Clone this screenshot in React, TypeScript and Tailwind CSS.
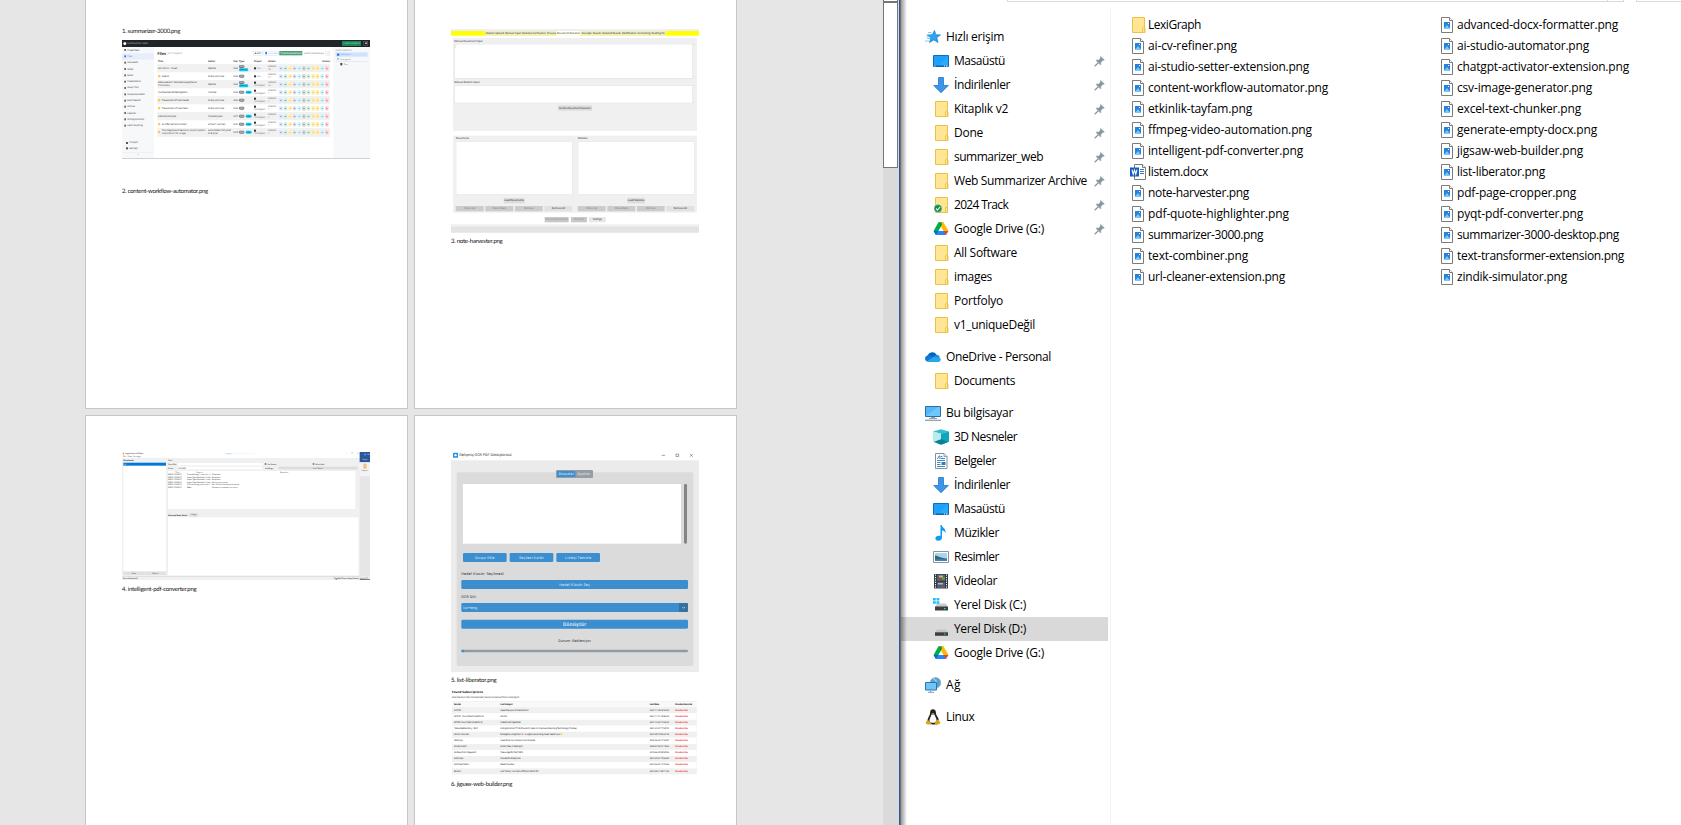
import React, { useLayoutEffect, useRef, useState } from "react";

/* Text tracked so that it spans exactly `w` pixels. */
function Fit({ t, w, c = "" }: { t: string; w: number; c?: string }) {
  const ref = useRef<HTMLSpanElement>(null);
  const [ls, setLs] = useState(0);
  useLayoutEffect(() => {
    if (!ref.current) return;
    const natural = parseFloat(getComputedStyle(ref.current).width);
    setLs((w - natural) / t.length);
  }, [t, w]);
  return (
    <span ref={ref} className={`inline-block shrink-0 whitespace-pre ${c}`} style={{ letterSpacing: `${ls}px` }}>
      {t}
    </span>
  );
}

/* ---------- Explorer icons ---------- */
const Svg = ({ children, c = "" }: { children: React.ReactNode; c?: string }) => (
  <svg viewBox="0 0 16 16" className={`block h-4 w-4 shrink-0 ${c}`}>{children}</svg>
);

const Folder = () => (
  <Svg>
    <path d="M2.500.5h12v10.200l.5.8v4h-12.500z" fill="#ffe594" stroke="#e8c34a" />
    <path d="M12.500 15.500v-4.500l.7-.8h1.300v5.300z" fill="#ffe594" stroke="#e8c34a" strokeWidth=".9" />
  </Svg>
);
const SyncedFolder = () => (
  <Svg>
    <path d="M2.500.5h12v15h-12z" fill="#ffe594" stroke="#e8c34a" />
    <path d="M12.500 15.500v-5h2v5z" fill="#ffe594" stroke="#e8c34a" strokeWidth=".9" />
    <circle cx="5" cy="11.500" r="4" fill="#168a50" stroke="#e3f2d2" strokeWidth=".5" />
    <path d="M3 11.500l1.500 1.600 2.700-3.200" fill="none" stroke="#d9f5e5" strokeWidth="1.100" />
  </Svg>
);
const Star = () => (
  <Svg>
    <path d="M9.500 1.500l1.300 4.200 4.700.2-3.700 2.700 1.200 4.900-4.200-2.600-4.300 2.700 1.300-4.500L2.500 6l4.700-.2z" fill="#2aa5ee" stroke="#1783cc" strokeWidth=".7" />
    <path d="M3 3.500h3.500M1.500 6H5M2 9.500h3M0 12h4M1.500 7.700h2.500" stroke="#63bdf0" strokeWidth=".8" />
  </Svg>
);
const Desktop = () => (
  <Svg>
    <path d="M.5 2.500h15v11H.5z" fill="#1ea1fb" stroke="#0b6fbf" />
    <path d="M5 13l9.500-9.500V13z" fill="#35b0ff" opacity=".6" />
    <path d="M1 13h14" stroke="#0a5fa8" />
    <path d="M1.500 13h1M11 13h1M13 13h1.500" stroke="#fff" />
  </Svg>
);
const Down = () => (
  <Svg>
    <path d="M5.500.5h5v8h4.800L8 15.700.7 8.500h4.800z" fill="#3a96e8" stroke="#2678c4" strokeWidth=".8" />
  </Svg>
);
const Drive = () => (
  <Svg>
    <path d="M5.300 1.500L.6 9.900 3 14l5-8.500z" fill="#00ac47" />
    <path d="M5.300 1.500h5.200L8 5.500z" fill="#0b8a3a" />
    <path d="M10.500 1.500l5 8.400h-5L5.600 1.500z" fill="#ffba00" />
    <path d="M5.300 1.500h3L9 3.400 7.500 6.100z" fill="#00993f" />
    <path d="M3 14l2.400-4.100h7.600L12.900 14z" fill="#2684fc" />
    <path d="M.6 9.900h4.900L3 14z" fill="#0066da" />
    <path d="M10.600 9.900h4.900L13 14z" fill="#ea4335" />
  </Svg>
);
const OneDrive = () => (
  <Svg>
    <path d="M3.200 12.500A3.200 3.200 0 012.600 6.500 5 5 0 0111.500 5.500l-3 7z" fill="#0364b8" />
    <path d="M2.600 6.500c2-.8 4 .2 6 1.500l-4 4.500H3A3.100 3.100 0 01.1 9.300C.2 8 1.200 6.900 2.600 6.500z" fill="#0f78d4" />
    <path d="M8 8l3-2.200c2 0 3.300.8 3.700 2.400L12 11z" fill="#1490df" />
    <path d="M2 12.200L8.500 8l6.200.8a2.300 2.300 0 01-1.200 4.200H3.300z" fill="#28a8ea" />
  </Svg>
);
const Pc = () => (
  <Svg>
    <path d="M.5 1.500h15v10H.5z" fill="#52b8fb" stroke="#2f6f9e" />
    <path d="M1 11L13 2h2v9z" fill="#7accff" opacity=".7" />
    <path d="M6 12.500h4M4 13.500h8" stroke="#8fa3b5" />
    <path d="M0 15.300h16" stroke="#8b98a8" strokeWidth="1.200" />
  </Svg>
);
const Cube = () => (
  <Svg>
    <path d="M8 .3l8 2.200L8 5 0 2.500z" fill="#35bcd0" />
    <path d="M0 2.500L8 4.800v11L0 12.800z" fill="#a3e6ea" />
    <path d="M16 2.500L8 4.800v11l8-3z" fill="#10a5bd" />
    <path d="M1 13l7-3 7 3-7 2.800z" fill="#0e7f93" />
    <path d="M0 12.500V2.500l8 2.300v5.500z" fill="#c5f2f2" opacity=".6" />
  </Svg>
);
const Doc = () => (
  <Svg>
    <path d="M2.500.5h8.500l3 3v12h-11.500z" fill="#fff" stroke="#8a8f94" />
    <path d="M11 .5v3h3" fill="#dfe3e6" stroke="#8a8f94" strokeWidth=".8" />
    <path d="M4.500 6L6 3h1v3M8 3.500h1.500M8 5.500h4M4 7.500h8M4 9.500h3.500M4 11.500h3.500M4 13.500h8" fill="none" stroke="#3a87c8" />
    <path d="M8.500 9h4v3h-4z" fill="#397cae" />
  </Svg>
);
const Music = () => (
  <Svg>
    <path d="M7.500 0h1.200c.3 2.700 4.500 3.200 3.800 8.200-.7-1.700-1.800-2.600-3.500-2.700v7.300c0 1.600-1.500 2.900-3.600 2.900-1.800 0-3-1-3-2.300 0-1.500 1.500-2.600 3.300-2.600.7 0 1.300.1 1.800.4z" fill="#0f9af5" />
  </Svg>
);
const Picture = () => (
  <Svg>
    <path d="M.5 2.500h15v11H.5z" fill="#fff" stroke="#8f9498" />
    <path d="M2 4h12v8H2z" fill="#a7d5f2" />
    <path d="M2 6.500c3 0 4 2.500 12 3V12H2z" fill="#356a72" />
    <path d="M2 10.500c5-.5 8-.5 12 0V12H2z" fill="#3f83c0" />
  </Svg>
);
const Video = () => (
  <Svg>
    <path d="M1 1h14v14.500H1z" fill="#3a3a3a" />
    <path d="M4 1.500h8v6.500H4zM4 9h8v6H4z" fill="#3d5f9b" />
    <path d="M6 2.500h4v2H6zM5 10h5v1.500H5z" fill="#e3b93a" />
    <path d="M5 5.500h4V7H5zM8 12.500h3V14H8z" fill="#b0462c" />
    <path d="M9 4.500h3v2H9z" fill="#64a54d" />
    <path d="M2.500 1.500v14M13.500 1.500v14" stroke="#fff" strokeDasharray="1.200 1.200" />
  </Svg>
);
const Disk = () => (
  <Svg>
    <path d="M4 8.500h9l2 3H2z" fill="#c3c5c7" />
    <path d="M2 11.300h13v3.500H2z" fill="#3d4043" />
    <path d="M11 13h1.500" stroke="#3fe04f" strokeWidth="1.200" />
  </Svg>
);
const DiskC = () => (
  <Svg>
    <path d="M4 6.500h9l2 3.500H2z" fill="#c9cbce" />
    <path d="M2 9.500h13v4H2z" fill="#3d4043" />
    <path d="M11 11.700h1.500" stroke="#3fe04f" strokeWidth="1.200" />
    <path d="M0 1h2.800v2.500H0zM3.500 1h2.800v2.500H3.500zM0 4.300h2.800v2.500H0zM3.500 4.300h2.800v2.500H3.500z" fill="#1fc0f2" />
  </Svg>
);
const Network = () => (
  <Svg>
    <circle cx="10.500" cy="5.800" r="5.300" fill="#5ba3cf" stroke="#7e9fb5" strokeWidth=".5" />
    <path d="M8 1.500c2.500.5 1.500 2.500 4 3" fill="none" stroke="#a9d5ec" strokeWidth="1.200" />
    <path d="M.5 5.500h11v7.500H.5z" fill="#6fc5f7" stroke="#2776ad" />
    <path d="M5.500 13.500v1.500M3 15.300h6" stroke="#7f9bb0" />
  </Svg>
);
const Tux = () => (
  <Svg>
    <path d="M5 4.500C5 1.500 6 .2 8 .2s3 1.500 3 4.300c0 2 3 4 3 8 0 2-3 3-6 3s-5.500-1-5.500-3c0-4 2.500-6 2.500-8z" fill="#262320" />
    <path d="M6.500 5.500h3c.5 2.500 2.500 4 2 7-.6 1.700-6.400 1.700-7 0-.4-3 1.500-4.500 2-7z" fill="#fff" />
    <path d="M6.300 4.200h3.200L8 5.800z" fill="#e6a817" />
    <path d="M2.500 10.500l4 3.800c-.5 1.600-2.500 1.700-5.500.4C.6 13.500 1.500 12 2.500 10.500zM13.500 10.500l2 3.500c-1.500 1.600-5 2.700-5.500 1.200 0-2 .5-4 3.500-4.700z" fill="#d9a520" />
  </Svg>
);
const PngFile = () => (
  <Svg>
    <path d="M2.500.5h8l3 3v12h-11z" fill="#fff" stroke="#7b7b7b" />
    <path d="M10.500.5v3h3" fill="#fff" stroke="#7b7b7b" />
    <path d="M5 5h6v6.500H5z" fill="#1f86dc" />
    <path d="M5 11.500L8 8l3 3.500z" fill="#79c5f5" />
    <path d="M9 5h2v2H9z" fill="#5a63d8" />
    <path d="M9 6.500h1" stroke="#fff" />
  </Svg>
);
const WordFile = () => (
  <Svg>
    <path d="M4.500.5h8l3 3v12h-11z" fill="#fff" stroke="#7b7b7b" />
    <path d="M12.500.5v3h3" fill="#fff" stroke="#7b7b7b" />
    <path d="M10 5.500h4M10 7.500h4M10 9.500h4" stroke="#2b7cd3" />
    <path d="M0 3.500h9v9H0z" fill="#185abd" />
    <path d="M2 5.700l1.200 4.500L4.500 6l1.300 4.200L7 5.700" fill="none" stroke="#fff" strokeWidth="1.100" />
  </Svg>
);
const Pin = () => (
  <svg viewBox="0 0 11 11" className="block h-[11px] w-[11px]">
    <path d="M6.500.5L10.300 4l-1.800.5-1.700 2L6.600 9 2 4.300l2.700-.2L6.300 2.500z" fill="#8b979f" stroke="#8b979f" strokeWidth=".6" />
    <path d="M.7 10.300L4.300 6.700" stroke="#8b979f" strokeWidth="1.300" />
  </svg>
);

type NavItem = { icon: () => React.JSX.Element; t: string; w: number; root?: boolean; pin?: boolean; gap?: boolean; sel?: boolean };
const nav: NavItem[] = [
  { icon: Star, t: "Hızlı erişim", w: 58, root: true },
  { icon: Desktop, t: "Masaüstü", w: 51, pin: true },
  { icon: Down, t: "İndirilenler", w: 56, pin: true },
  { icon: Folder, t: "Kitaplık v2", w: 54, pin: true },
  { icon: Folder, t: "Done", w: 29, pin: true },
  { icon: Folder, t: "summarizer_web", w: 89, pin: true },
  { icon: Folder, t: "Web Summarizer Archive", w: 133, pin: true },
  { icon: SyncedFolder, t: "2024 Track", w: 54, pin: true },
  { icon: Drive, t: "Google Drive (G:)", w: 90, pin: true },
  { icon: Folder, t: "All Software", w: 63 },
  { icon: Folder, t: "images", w: 38 },
  { icon: Folder, t: "Portfolyo", w: 49 },
  { icon: Folder, t: "v1_uniqueDeğil", w: 81 },
  { icon: OneDrive, t: "OneDrive - Personal", w: 105, root: true, gap: true },
  { icon: Folder, t: "Documents", w: 61 },
  { icon: Pc, t: "Bu bilgisayar", w: 67, root: true, gap: true },
  { icon: Cube, t: "3D Nesneler", w: 63 },
  { icon: Doc, t: "Belgeler", w: 42 },
  { icon: Down, t: "İndirilenler", w: 56 },
  { icon: Desktop, t: "Masaüstü", w: 51 },
  { icon: Music, t: "Müzikler", w: 45 },
  { icon: Picture, t: "Resimler", w: 45 },
  { icon: Video, t: "Videolar", w: 43 },
  { icon: DiskC, t: "Yerel Disk (C:)", w: 72 },
  { icon: Disk, t: "Yerel Disk (D:)", w: 72, sel: true },
  { icon: Drive, t: "Google Drive (G:)", w: 90 },
  { icon: Network, t: "Ağ", w: 15, root: true, gap: true },
  { icon: Tux, t: "Linux", w: 28.5, root: true, gap: true },
];

const files: [string, number][][] = [
  [["LexiGraph", 53], ["ai-cv-refiner.png", 89], ["ai-studio-setter-extension.png", 161], ["content-workflow-automator.png", 180], ["etkinlik-tayfam.png", 104], ["ffmpeg-video-automation.png", 164], ["intelligent-pdf-converter.png", 155], ["listem.docx", 60], ["note-harvester.png", 101], ["pdf-quote-highlighter.png", 141], ["summarizer-3000.png", 115], ["text-combiner.png", 100], ["url-cleaner-extension.png", 137]],
  [["advanced-docx-formatter.png", 161], ["ai-studio-automator.png", 132], ["chatgpt-activator-extension.png", 172], ["csv-image-generator.png", 135], ["excel-text-chunker.png", 124], ["generate-empty-docx.png", 140], ["jigsaw-web-builder.png", 126], ["list-liberator.png", 88], ["pdf-page-cropper.png", 119], ["pyqt-pdf-converter.png", 126], ["summarizer-3000-desktop.png", 162], ["text-transformer-extension.png", 167], ["zindik-simulator.png", 110]],
];

/* Thumbnail of a window: drawn 744 px wide and shown at a third of that size. */
const Thumb = ({ box, inner, children }: { box: string; inner: string; children: React.ReactNode }) => (
  <div className={`w-[248px] shrink-0 overflow-hidden [text-rendering:geometricPrecision] ${box}`}>
    <div className={`w-[744px] origin-top-left scale-[0.33334] overflow-hidden font-[Open_Sans,sans-serif] ${inner}`}>{children}</div>
  </div>
);

const Caption = ({ t, w }: { t: string; w: number }) => (
  <div className="flex h-3 items-center font-[Lato,sans-serif] text-[6px] leading-3 text-[#111] [text-rendering:geometricPrecision]"><Fit t={t} w={w} /></div>
);

/* ---------- 1: summarizer ---------- */
const side: [string, number][] = [["Project Desk", 36], ["Files", 14], ["Documents", 32], ["Notes", 18], ["Books", 18], ["Presentations", 40], ["Study Plans", 34], ["Study Documents", 52], ["Exam Reports", 40], ["Archive", 22], ["Calendar", 26], ["Writing Assistant", 50], ["Learn Anything", 46]];
type Row = { t: string; t2?: string; w: number; star?: boolean; a: string; aw: number; y: string; k: string; p?: boolean };
const rows: Row[] = [
  { t: "Don Norris - Visuell", w: 58, a: "Website", aw: 23, y: "2023", k: "stack", p: true },
  { t: "Dreams", w: 22, star: true, a: "Dr Boy, Karl Lane", aw: 48, y: "2023", k: "one", p: true },
  { t: "Little Guide 2021: Machine Drawing Manual", t2: "Philosophy", w: 115, a: "Website", aw: 23, y: "2023", k: "stack" },
  { t: "YouTube Video Whitelisting Basics", w: 88, a: "YouTube", aw: 24, y: "2023", k: "two" },
  { t: "The evolution of Public Reader", w: 82, star: true, a: "Dr Boy, Karl Lane", aw: 48, y: "2023", k: "one" },
  { t: "The evolution of Public Read", w: 78, star: true, a: "Dr Boy, Karl Lane", aw: 48, y: "2023", k: "one" },
  { t: "A Minimal Storyline", w: 54, a: "Tyra Bold, Jones", aw: 43, y: "2017", k: "two" },
  { t: "An Offer Remains Indirect", w: 74, star: true, a: "Archie T. Sanchez", aw: 52, y: "2024", k: "two" },
  { t: "The integrative of decisions, psychic options,", t2: "implications for usage...", w: 132, star: true, a: "Susan Noble, Prof. Just et", aw: 68, y: "2018", k: "two" },
];
const acts = ["bg-[#dceafe] text-[#2f6fe8]", "bg-[#d8eee2] text-[#198754]", "bg-[#fff0c4] text-[#f5b400]", "bg-[#e4e6e8] text-[#555c63]", "bg-[#d4f5fc] text-[#20bfe0]", "bg-[#d5d7d9] text-[#6c757d]", "bg-[#d8f0e2] text-[#198754]", "bg-[#ffedb3] text-[#f5b829]", "bg-[#ffedb3] text-[#f5b829]", "bg-[#cff4fc] text-[#0dbad8]", "bg-[#fbd5d9] text-[#dc3545]"];

const Summarizer = () => (
  <Thumb box="h-[119px]" inner="h-[357px] bg-white text-[7px] leading-[9px] text-[#333]">
    <div className="flex h-[21px] items-center bg-[#212529] pl-1 pr-[6px] text-white">
      <div className="h-[9px] w-[9px] rounded-full bg-white" />
      <div className="ml-[3px] text-[8px] text-[#bbb]"><Fit t="Summarizer 3000" w={61} /></div>
      <div className="ml-auto flex h-[15px] w-[57px] items-center justify-center bg-[#198754] text-[#b8dccb]"><Fit t="+ Add Content ▾" w={50} /></div>
      <div className="ml-2 flex h-[13px] w-[13px] items-center justify-center border border-[#888] text-[8px]">♟</div>
    </div>
    <div className="flex h-[333px]">
      <div className="flex w-[96px] flex-col bg-[#f7f8fa]">
        {side.map(([t, w], i) => (
          <div key={t} className={`flex h-[18.900px] items-center pl-[7px] ${i === 1 ? "bg-[#e7eef9] text-[#3b7cf0]" : ""}`}>
            <span className={`mr-[4px] h-[6px] w-[5px] ${i === 1 ? "bg-[#2474ee]" : "bg-[#666]"}`} /><Fit t={t} w={w} />
          </div>
        ))}
        <div className="mt-[34px] flex h-4 items-center pl-3"><span className="mr-1 h-[6px] w-[6px] bg-[#555]" /><Fit t="Prompts" w={25} /></div>
        <div className="flex h-4 items-center pl-3"><span className="mr-1 h-[6px] w-[6px] bg-[#555]" /><Fit t="Settings" w={25} /></div>
        <div className="mt-[3px] flex h-4 items-center justify-center border-t border-[#e2e2e2]">«</div>
      </div>
      <div className="w-[538px] px-[10px] pt-[11px]">
        <div className="flex h-[15px] items-center">
          <b className="mr-1 text-[12px] leading-[15px]"><Fit t="Files" w={26} /></b><Fit t="(All Projects)" w={45} c="text-[#777]" />
          <div className="ml-auto flex h-[13px] w-[27px] items-center justify-center border border-[#ccc]">✚ Edit</div>
          <div className="ml-1 flex h-[13px] w-[45px] items-center gap-1 border border-[#b9d1fa] pl-1 text-[6px] text-[#6ca0f8]"><i className="h-[7px] w-[5px] shrink-0 bg-[#2474ee]" /><Fit t="Quick Menu" w={32} /></div>
          <div className="ml-[2px] flex h-[13px] w-[69px] items-center justify-center bg-[#4b9e75] text-white"><Fit t="✎ Remove Content (0) ▾" w={62} /></div>
          <div className="ml-[6px] w-[64px] text-[#888]"><Fit t="Search in the entire app" w={58} /></div>
          <div className="flex h-[13px] w-[13px] items-center justify-center border border-[#ccc]">⌕</div>
        </div>
        <div className="mt-[7px] flex h-[19px] items-center border-b border-[#ddd] pl-[2px] font-bold">
          <span className="w-[150px]"><Fit t="Title" w={15} /></span><span className="w-[76px]"><Fit t="Author" w={21} /></span><span className="w-[17px]"><Fit t="Year" w={13} /></span><span className="w-[45px]"><Fit t="Type" w={16} /></span><span className="w-[42px]"><Fit t="Project" w={22} /></span><Fit t="Added ↓" w={26} /><span className="ml-auto"><Fit t="Actions" w={23} /></span>
        </div>
        {rows.map((r, i) => (
          <div key={i} className={`flex h-6 items-center border-b border-[#e4e4e4] pl-[2px] ${i % 2 ? "bg-white" : "bg-[#f1f1f1]"}`}>
            <div className="flex w-[150px] items-center">
              {r.star && <span className="mr-1 h-[7px] w-[7px] rounded-full bg-[#ffc431]" />}
              <div><Fit t={r.t} w={r.w} />{r.t2 && <div>{r.t2}</div>}</div>
            </div>
            <div className="w-[76px]"><Fit t={r.a} w={r.aw} />{i === 8 && <div>Al & Jane</div>}</div>
            <div className="w-[17px]"><Fit t={r.y} w={14} /></div>
            <div className={`flex w-[45px] text-[6px] leading-[8px] text-white ${r.k === "stack" ? "flex-col items-start gap-[1px]" : "gap-1"}`}>
              <span className="h-[9px] w-[16px] rounded-sm bg-[#737a80] text-center">PDF</span>
              {r.k === "stack" && <span className="h-[9px] w-[28px] rounded-sm bg-[#0dcaf0] text-center text-[#145]">Manual</span>}
              {r.k === "two" && <span className="h-[9px] w-[18px] rounded-sm bg-[#0dcaf0] text-center text-[#145]">URL</span>}
            </div>
            {r.p ? (
              <div className="flex w-[42px] items-center gap-[2px] text-[#6ca0f8]"><span className="h-[6px] w-[6px] bg-[#333]" />Dev</div>
            ) : (
              <div className="w-[42px] text-[#777]"><div className="h-[6px] w-[6px] bg-[#333]" /><Fit t="Unassigned" w={32} /></div>
            )}
            <div className="w-[33px] text-[#666]"><Fit t="2025-08-" w={25} /><div>1{i < 3 ? 5 - i : ""}</div></div>
            <div className="flex flex-1 justify-between pr-1 text-[6px]">
              {acts.map((a, j) => <span key={j} className={`flex h-[14px] w-[11px] items-center justify-center rounded-sm ${a}`}>■</span>)}
            </div>
          </div>
        ))}
      </div>
      <div className="w-[110px] bg-[#f7f8fa] px-[7px] pt-[5px] text-[6px] text-[#777]">
        <div className="h-[11px]"><Fit t="SWITCH DESKTOP" w={48} /></div>
        <div className="flex h-[13px] items-center gap-1 bg-[#cfe2ff] pl-1 text-[#4b84d8]"><i className="h-[6px] w-[7px] bg-[#1d6cf0]" /><Fit t="All Projects" w={30} /></div>
        <div className="flex h-[15px] items-center gap-1 border-b border-[#ccd] pl-1"><i className="h-[6px] w-[6px] border border-[#999]" /><Fit t="Unassigned" w={30} /></div>
        <div className="flex h-[15px] items-center gap-1 pl-[14px] text-[#333]"><i className="h-[7px] w-[6px] bg-[#444]" /><Fit t="Test" w={12} /></div>
      </div>
    </div>
    <div className="h-[3px] bg-[#ced2d6]" />
  </Thumb>
);

/* ---------- 2: document selection window ---------- */
const GreyBtn = ({ t, c, w }: { t: string; c: string; w: number }) => (
  <div className={`flex h-4 shrink-0 items-center justify-center ${c}`}><Fit t={t} w={w} /></div>
);
const ListGroup = ({ name, nw, load, lw, bw }: { name: string; nw: number; load: string; lw: number; bw: string }) => (
  <div className="w-[366px] bg-[#f0f0f0] pl-[8px]">
    <div className="flex h-[17px] items-center"><Fit t={name} w={nw} /></div>
    <div className="h-[161px] w-[352px] border-[2px] border-[#e4e4e4] bg-white" />
    <div className="flex h-[33px] w-[350px] items-center justify-center"><GreyBtn t={load} w={lw} c={`bg-[#dcdcdc] ${bw}`} /></div>
    <div className="flex w-[350px] justify-between text-[#777]">
      <GreyBtn t="Move Up" w={32} c="w-[84px] bg-[#ccc]" /><GreyBtn t="Move Down" w={40} c="w-[84px] bg-[#ccc]" /><GreyBtn t="Remove" w={28} c="w-[83px] bg-[#ccc]" /><GreyBtn t="Remove All" w={40} c="w-[84px] bg-[#e1e1e1] text-[#222]" />
    </div>
  </div>
);
const Harvester = () => (
  <Thumb box="h-[204px]" inner="h-[611px] bg-white text-[8px] leading-[10px] text-[#222]">
    <div className="h-[6px] bg-[#efefef]" />
    <div className="flex h-[14px] bg-[#ff0] pl-[102px] leading-[14px]">
      <div className="w-[215px] bg-[#f0f0c4] pl-[2px]"><Fit t="Statistic Upload  Manual Input  Statistics Verification  Process" w={211} /></div>
      <div className="w-[72px] bg-white pl-[1px]"><Fit t="Document Selection" w={69} /></div>
      <div className="w-[255px] bg-[#f0f0c4] pl-[3px]"><Fit t="Excerpts  Results  Detailed Results  Modification  Formatting  Reading Fix" w={249} /></div>
    </div>
    <div className="mx-[6px] mt-[7px] h-[279px] bg-[#f0f0f0] pl-1">
      <div className="flex h-[17px] items-center"><Fit t="Manual Document Input" w={84} /></div>
      <div className="flex h-[105px]">
        <div className="w-[716px] border-[2px] border-[#e2e2e2] bg-white">|</div>
        <div className="flex flex-1 flex-col justify-between text-[7px] text-[#888]"><span>⌃</span><span>⌄</span></div>
      </div>
      <div className="flex h-[20px] items-center"><Fit t="Manual Bulletin Input" w={75} /></div>
      <div className="flex h-[54px]">
        <div className="w-[716px] border-[2px] border-[#e2e2e2] bg-white" />
        <div className="flex flex-1 flex-col justify-between text-[7px] text-[#888]"><span>⌃</span><span>⌄</span></div>
      </div>
      <div className="ml-[311px] mt-[6px]"><GreyBtn t="Send to Document Selection" w={96} c="w-[102px] bg-[#dcdcdc]" /></div>
    </div>
    <div className="mx-[6px] mt-[14px] flex h-[231px]">
      <ListGroup name="Documents" nw={40} load="Load Documents" lw={59} bw="w-[63px]" />
      <ListGroup name="Statistics" nw={29} load="Load Statistics" lw={49} bw="w-[53px]" />
    </div>
    <div className="flex h-[35px] items-center pl-[281px] pt-[6px]">
      <GreyBtn t="Process Documents" w={68} c="mr-[7px] w-[72px] bg-[#c8c8c8] text-[#888]" />
      <GreyBtn t="Run Full" w={28} c="mr-[6px] w-[48px] bg-[#c8c8c8] text-[#888]" />
      <GreyBtn t="Settings" w={27} c="w-[50px] bg-[#e8e8e8]" />
    </div>
    <div className="h-[8px] bg-[#efefef]" />
    <div className="h-[17px] border-y border-[#d5d5d5] bg-[#e4e4e4]" />
  </Thumb>
);

/* ---------- 3: notebook window ---------- */
const logs: [string, string][] = [
  ["Scrambled type 1, step 1, p1 - It", "3 Steps here"],
  ["Import Type: Notebook - H asks", "4 steps here"],
  ["Import Type: Notebook - H asks", "4 steps here"],
  ["Import Type: Notebook - H asks", "Libere count mean"],
  ["Still remaining count mail - I", "Not 120 mi to believe preliminary"],
  ["Mode", "You want it example: test three"],
];
const Notebook = () => (
  <Thumb box="h-[128px]" inner="h-[385px] bg-[#f0f0f0] text-[6px] leading-[8px] text-[#333]">
    <div className="flex h-[385px]">
      <div className="w-[713px]">
        <div className="h-[18px] bg-white">
          <div className="flex h-[9px] items-center pl-[2px]"><i className="mr-[3px] h-[5px] w-[4px] bg-[#e8a33a]" /><Fit t="Image Converter v1.0.0 Alpha" w={54} /><span className="ml-[248px] h-1 w-[18px] bg-[#c5e3fa]" /><span className="h-px w-[70px] bg-[#d7ebfa]" /><span className="ml-auto flex gap-[11px] pr-[4px]"><span>–</span><span>☐</span><span>✕</span></span></div>
          <div className="flex h-[9px] items-center gap-1 pl-[3px]"><span>File</span><span>View</span><span>Settings</span></div>
        </div>
        <div className="flex h-[353px] pl-1">
          <div className="w-[134px]">
            <div className="flex h-[14px] items-center font-bold"><Fit t="Notebooks" w={32} /></div>
            <div className="h-[325px] w-[128px] bg-white"><div className="h-[9px] bg-[#0078d7] pl-[2px] text-white">all</div></div>
            <div className="mt-[2px] flex w-[128px] gap-[1px]"><span className="h-[10px] flex-1 bg-[#e1e1e1] text-center">New</span><span className="h-[10px] flex-1 bg-[#e1e1e1] text-center">Delete</span></div>
          </div>
          <div className="w-[571px]">
            <div className="h-[12px] pt-[3px]"><Fit t="Notes" w={13} /></div>
            <div className="flex h-[12px] items-center"><span className="w-[29px]"><Fit t="Source Filter" w={25} /></span><span className="h-[7px] w-[256px] bg-white" /><span className="ml-[5px] mr-[2px] h-[6px] w-[6px] border border-[#888] bg-white" /><Fit t="Start Number" w={27} /><span className="ml-[109px] mr-[2px] h-[6px] w-[6px] border border-[#888] bg-white" /><Fit t="Refresh Now" w={26} /></div>
            <div className="flex h-[12px] items-center"><span className="w-[29px]"><Fit t="Format" w={15} /></span><span className="h-[8px] w-[254px] bg-white pl-[2px] leading-[8px]"><Fit t="01/01/2025" w={22} /></span><span className="ml-[8px] w-[40px]"><Fit t="Load Range" w={24} /></span><span className="h-[8px] w-[238px] bg-[#ddd] text-center">Last Notes</span></div>
            <div className="mt-[3px] flex h-[114px]">
              <div className="w-[562px] bg-white">
                <div className="flex h-[8px] items-center pl-[22px]"><span className="w-[63px]">Title</span><span className="w-[251px]">Source</span><span>Remarks</span></div>
                {logs.map(([a, b], i) => (
                  <div key={i} className="flex h-[7.400px] items-center leading-[7px]"><span className="w-[57px]"><Fit t="2025-01-12 12:00:15" w={40} /></span><span className="w-[74px]"><Fit t={a} w={i === 5 ? 12 : 70} /></span><Fit t={b} w={[26, 26, 26, 48, 82, 78][i]} /></div>
                ))}
              </div>
            </div>
            <div className="flex h-[24px] items-end pb-[1px] font-bold"><Fit t="Selected Note Detail" w={58} /><span className="ml-[6px] h-[11px] w-[26px] bg-[#e0e0e0] text-center font-normal">Copy</span></div>
            <div className="mt-[1px] h-[174px] bg-white" />
          </div>
        </div>
        <div className="mt-[2px] flex h-[12px] items-center justify-between border-t-2 border-[#d8d8d8] pl-[2px] pr-1 text-[#222]"><Fit t="Source: Notebook: All" w={44} /><Fit t="Toggle Dark Theme   Always Onboard" w={74} /></div>
      </div>
      <div className="flex w-[31px] flex-col">
        <div className="flex h-[31px] flex-col items-center justify-between bg-[#2b579a] py-[3px] text-[6px] text-white"><span className="ml-3 whitespace-nowrap">▥ &nbsp; Pa</span><span className="text-[5px]">Dosya</span></div>
        <div className="flex h-[42px] flex-col items-center bg-[#f3f3f3] pt-1"><span className="h-[15px] w-[10px] bg-[#ecc583]" /><span>Yapıştır</span></div>
        <div className="h-[301px] bg-[#e6e6e6]" />
        <div className="h-[8px] overflow-hidden whitespace-nowrap bg-[#f0f0f0]"><Fit t="Sayfa 2/17" w={24} /></div>
        <div className="h-[3px] bg-[#444]" />
      </div>
    </div>
  </Thumb>
);

/* ---------- 4: OCR converter window ---------- */
const Blue = ({ t, w, c = "" }: { t: string; w: number; c?: string }) => (
  <div className={`flex h-[27px] shrink-0 items-center justify-center rounded-[4px] bg-[#3b8ed0] text-[#dce9f4] ${c}`}><Fit t={t} w={w} /></div>
);
const Ocr = () => (
  <Thumb box="h-[222px]" inner="h-[666px] bg-[#ebebeb] font-[Roboto,sans-serif] text-[11px] leading-[13px] text-[#333]">
    <div className="flex h-[31px] items-center bg-white pl-[6px]">
      <div className="flex h-[15px] w-[15px] items-center justify-center rounded-[2px] bg-[#1f8fe5]"><i className="h-[7px] w-[7px] rounded-full bg-white" /></div>
      <div className="ml-1"><Fit t="Gelişmiş OCR PDF Dönüştürücü" w={157} /></div>
      <svg viewBox="0 0 100 12" className="ml-auto mr-[14px] h-3 w-[100px]" fill="none" stroke="#444" strokeWidth="1.500"><path d="M2 6h10M45 2h8v8h-8zM87 2l8 8M95 2l-8 8" /></svg>
    </div>
    <div className="mx-[17px] mt-[36px] flex h-[581px] flex-col rounded-[6px] bg-[#dbdbdb] pl-[14px]">
      <div className="-mt-[7px] ml-[284px] flex h-[24px] w-[111px] shrink-0 items-center rounded-[4px] bg-[#979da2] px-[3px] text-[#e4e9ed]">
        <div className="flex h-[18px] w-[55px] items-center justify-center bg-[#3b8ed0]"><Fit t="Dosyalar" w={46} /></div>
        <div className="flex flex-1 justify-center"><Fit t="Ayarlar" w={38} /></div>
      </div>
      <div className="mt-[18px] flex h-[179px] shrink-0 pl-[5px]"><div className="w-[654px] bg-white" /><div className="ml-[9px] w-[9px] rounded-[4px] bg-[#858585]" /></div>
      <div className="mt-[28px] flex gap-[9px] pl-[5px]"><Blue t="Dosya Ekle" w={59} c="w-[131px]" /><Blue t="Seçileni Kaldır" w={75} c="w-[131px]" /><Blue t="Listeyi Temizle" w={79} c="w-[131px]" /></div>
      <div className="mt-[28px] h-[13px]"><Fit t="Hedef Klasör: Seçilmedi" w={127} /></div>
      <Blue t="Hedef Klasör Seç" w={92} c="mt-[13px] w-[680px]" />
      <div className="mt-[18px] h-[13px]"><Fit t="OCR Dili:" w={46} /></div>
      <div className="mt-[11px] flex h-[27px] w-[680px] shrink-0 items-center overflow-hidden rounded-[4px] bg-[#3b8ed0] pl-[6px] text-[#dce9f4]">
        <Fit t="tur+eng" w={42} />
        <div className="ml-auto flex h-full w-[27px] items-center justify-center bg-[#36719f]"><svg viewBox="0 0 10 6" className="h-[6px] w-[10px]" fill="none" stroke="#e5eef5" strokeWidth="2"><path d="M1 1l4 4 4-4" /></svg></div>
      </div>
      <Blue t="Dönüştür" w={70} c="mt-[23px] w-[680px] text-[15px] font-bold" />
      <div className="mt-[29px] flex h-[13px] w-[680px] justify-center"><Fit t="Durum: Bekleniyor" w={98} /></div>
      <div className="mt-[21px] h-[8px] w-[680px] rounded-[4px] bg-[#939ba2]"><div className="h-full w-[9px] rounded-[4px] bg-[#3b8ed0]" /></div>
    </div>
  </Thumb>
);

/* ---------- 5: subscription list ---------- */
const subs: [string, number, string, number, string][] = [
  ["AIPRM", 20, "OpenRise your AI interactions!", 84, "2024-11-25 22:02:02"],
  ["AIPRM - Your Cheat Code for AI", 89, "last call", 19, "2024-11-21 20:56:26"],
  ["AIPRM-Your Cheat Code for AI", 85, "Unleash with OpenRise!", 60, "2024-12-02 19:06:22"],
  ['"About Better Story | Elsa"', 72, "Calling All Smart TV Enthusiasts: Help Us Improve Streaming Technology! (Turkey)", 229, "2021-04-07 17:08:42"],
  ["Allison Courses", 45, "Emergency Cognition: 🧠 A Highly rewarding career needs you 👉", 187, "2024-08-18 02:04:46"],
  ["Allianz Joy", 26, "OpenRise Your Analysis and Analyze", 104, "2022-06-20 14:02:57"],
  ["Asaad at edX", 37, "Asaad: New, Checking In", 67, "2025-04-02 01:15:06"],
  ["Andrew from Ragwood!", 66, "Free usage for the TOEFL", 68, "2015-06-28 08:08:26"],
  ["Anthropic", 28, "Claude for Enterprise", 60, "2024-09-04 18:06:59"],
  ["Anthropic Team", 44, "Meet Claude 3", 42, "2024-03-04 19:40:36"],
  ["Blinkist", 20, "Last Today: Your 50% Off Ends March for", 115, "2024-05-14 08:11:02"],
];
const Subscriptions = () => (
  <Thumb box="h-[88px]" inner="h-[264px] bg-white px-[3px] text-[7px] leading-[10px] text-[#222]">
    <div className="flex h-[18px] items-center text-[9px] font-bold text-black"><Fit t="Found Subscriptions" w={93} /></div>
    <div className="flex h-[18px] items-center"><Fit t='Click the link in the "Unsubscribe" column to opt-out from a mailing list.' w={202} /></div>
    <div className="flex h-[19px] w-[734px] items-center border-y border-[#e5e5e5] bg-[#f9f9f9] pl-[6px] font-bold text-[#111]">
      <span className="w-[139px]"><Fit t="Sender" w={21} /></span><span className="w-[448px]"><Fit t="Last Subject" w={37} /></span><span className="w-[76px]"><Fit t="Last Date" w={28} /></span><Fit t="Unsubscribe Link" w={51} />
    </div>
    {subs.map(([a, aw, b, bw, d], i) => (
      <div key={i} className={`flex h-[18.250px] w-[734px] items-center border-x border-[#ececec] pl-[5px] ${i % 2 ? "bg-white" : "bg-[#f0f0f0]"}`}>
        <span className="w-[139px]"><Fit t={a} w={aw} /></span><span className="w-[448px]"><Fit t={b} w={bw} /></span><span className="w-[76px]"><Fit t={d} w={58} /></span><b className="text-[#f03030]"><Fit t="Unsubscribe" w={38} /></b>
      </div>
    ))}
  </Thumb>
);

const page = "flex w-[323px] shrink-0 flex-col border border-[#c6c6c6] bg-white";

export default function App() {
  return (
    <div className="flex h-[825px] w-[1681px] overflow-hidden bg-white">
      <div className="grid h-[825px] w-[883px] shrink-0 grid-cols-[323px_323px] grid-rows-[409px_410px] content-start gap-[6px] overflow-hidden bg-[#e6e6e6] pl-[85px]">
        <div className={`${page} border-t-0 pl-[36px] pt-[26px]`}>
          <Caption t="1. summarizer-3000.png" w={58} />
          <div className="h-[2px]" />
          <Summarizer />
          <div className="h-[27px]" />
          <Caption t="2. content-workflow-automator.png" w={86} />
        </div>
        <div className={`${page} border-t-0 pl-[36px] pt-[29px]`}>
          <Harvester />
          <div className="h-[3px]" />
          <Caption t="3. note-harvester.png" w={51.500} />
        </div>
        <div className={`${page} border-b-0 pl-[36px] pt-[36px]`}>
          <Notebook />
          <div className="h-[4px]" />
          <Caption t="4. intelligent-pdf-converter.png" w={74.500} />
        </div>
        <div className={`${page} border-b-0 pl-[36px] pt-[34px]`}>
          <Ocr />
          <div className="h-[3px]" />
          <Caption t="5. list-liberator.png" w={45.500} />
          <div className="h-[2px]" />
          <Subscriptions />
          <div className="h-[2px]" />
          <Caption t="6. jigsaw-web-builder.png" w={61} />
        </div>
      </div>

      <div className="h-[825px] w-[16px] shrink-0 bg-[#dadada]">
        <div className="h-[3px] w-[15px] border border-t-0 border-b-2 border-[#757575] bg-white" />
        <div className="h-[165px] w-[15px] border border-t-0 border-[#757575] bg-white" />
      </div>
      <div className="w-px shrink-0 bg-[#2b5a94]" />
      <div className="w-px shrink-0 bg-[#6a7078]" />

      <div className="relative flex w-[780px] shrink-0 bg-white font-[Open_Sans,Noto_Sans,sans-serif] text-[12px] leading-6 text-black">
        <div className="flex w-[207px] shrink-0 flex-col pt-[25px]">
          {nav.map(({ icon: Icon, t, w, root, pin, gap, sel }, i) => (
            <div key={i} className={`flex h-6 shrink-0 items-center ${root ? "pl-6" : "pl-8"} ${gap ? "mt-2" : ""} ${sel ? "bg-[#d9d9d9]" : ""}`}>
              <Icon />
              <span className="ml-[5px] flex"><Fit t={t} w={w} /></span>
              {pin && <span className="ml-auto mr-[3px]"><Pin /></span>}
            </div>
          ))}
        </div>
        <div className="ml-[2px] mt-[9px] w-px shrink-0 bg-[#f2f2f2]" />
        <div className="flex flex-1 flex-col">
          <div className="-ml-[104px] flex h-[2px] shrink-0">
            <div className="w-[600px] border-b border-l border-[#d9d9d9]" />
            <div className="w-[17px] border-x border-b border-[#d9d9d9]" />
            <div className="ml-[12px] flex-1 border-b border-l border-[#d9d9d9]" />
          </div>
          <div className="flex pl-[19px] pt-[12px]">
            {files.map((col, c) => (
              <div key={c} className="w-[309px] shrink-0">
                {col.map(([t, w]) => (
                  <div key={t} className="flex h-[21px] items-center">
                    {t === "LexiGraph" ? <Folder /> : t === "listem.docx" ? <WordFile /> : <PngFile />}
                    <span className="ml-[2px] flex leading-[20px]"><Fit t={t} w={w} /></span>
                  </div>
                ))}
              </div>
            ))}
          </div>
        </div>
        <div className="pointer-events-none absolute inset-y-0 left-0 w-[6px] bg-gradient-to-r from-black/40 to-transparent" />
      </div>
    </div>
  );
}
